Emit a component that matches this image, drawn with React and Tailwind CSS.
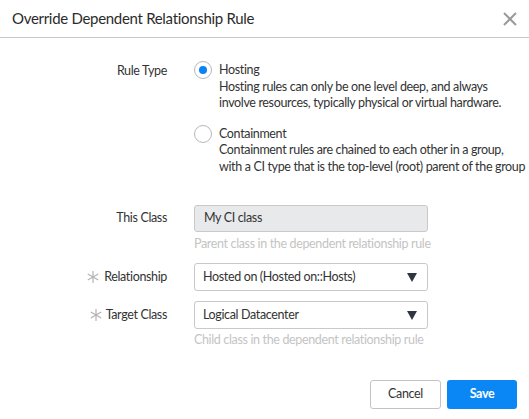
import React, { useState } from "react";

const font = { fontFamily: "Lato, 'Open Sans', sans-serif" };

function Radio({ checked, onClick }) {
  return (
    <button
      onClick={onClick}
      className="w-[18px] h-[18px] rounded-full border border-[#b8b8b8] bg-white flex items-center justify-center shrink-0"
    >
      {checked && <span className="w-[8px] h-[8px] rounded-full bg-[#0a84f5]" />}
    </button>
  );
}

function Asterisk() {
  return (
    <svg width="12" height="12" viewBox="0 0 12 12">
      <g stroke="#b3b3b3" strokeWidth="1.2" strokeLinecap="round">
        <line x1="6" y1="0.5" x2="6" y2="11.5" />
        <line x1="1.2" y1="3.2" x2="10.8" y2="8.8" />
        <line x1="1.2" y1="8.8" x2="10.8" y2="3.2" />
      </g>
    </svg>
  );
}

function Caret() {
  return (
    <svg width="10" height="9" viewBox="0 0 10 9">
      <path d="M0 0 H10 L5 9 Z" fill="#2f3640" />
    </svg>
  );
}

export default function App() {
  const [rule, setRule] = useState("hosting");

  return (
    <div
      className="w-[529px] h-[419px] bg-white text-[#333] text-[12.5px] tracking-[-0.35px] overflow-hidden"
      style={font}
    >
      {/* header */}
      <div className="h-[38px] flex items-center justify-between px-[12px] border-b border-[#c8c8cc]">
        <h1 className="text-[15px] tracking-[-0.3px] text-[#2b2b2b]">Override Dependent Relationship Rule</h1>
        <svg width="14" height="14" viewBox="0 0 14 14">
          <g stroke="#9a9a9a" strokeWidth="2">
            <line x1="1" y1="1" x2="13" y2="13" />
            <line x1="13" y1="1" x2="1" y2="13" />
          </g>
        </svg>
      </div>

      {/* body */}
      <div className="pt-[23px]">
        <div className="flex">
          <div className="w-[167px] shrink-0 text-right pt-[1px] leading-[17px]">Rule Type</div>
          <div className="ml-[27px] flex flex-col">
            <div className="flex">
              <Radio checked={rule === "hosting"} onClick={() => setRule("hosting")} />
              <div className="ml-[7px] leading-[16.5px] pt-[1px] whitespace-nowrap">
                <div>Hosting</div>
                <div>Hosting rules can only be one level deep, and always</div>
                <div>involve resources, typically physical or virtual hardware.</div>
              </div>
            </div>
            <div className="flex mt-[13px]">
              <Radio checked={rule === "containment"} onClick={() => setRule("containment")} />
              <div className="ml-[7px] leading-[16.5px] pt-[1px] whitespace-nowrap">
                <div>Containment</div>
                <div>Containment rules are chained to each other in a group,</div>
                <div>with a CI type that is the top-level (root) parent of the group</div>
              </div>
            </div>
          </div>
        </div>

        <div className="flex items-center mt-[30px]">
          <div className="w-[167px] shrink-0 text-right">This Class</div>
          <div className="ml-[27px] w-[234px] h-[27px] rounded-[3px] border border-[#c9c9c9] bg-[#e8e9eb] flex items-center px-[9px]">
            My CI class
          </div>
        </div>
        <div className="ml-[194px] mt-[4px] text-[#c4c4c4] leading-[16px]">
          Parent class in the dependent relationship rule
        </div>

        <div className="flex items-center mt-[11px]">
          <div className="w-[167px] shrink-0 flex items-center">
            <div className="flex-1 pl-[87px]"><Asterisk /></div>
            <span>Relationship</span>
          </div>
          <div className="ml-[27px] w-[234px] h-[28px] rounded-[3px] border border-[#c9c9c9] bg-white flex items-center justify-between pl-[8px] pr-[10px]">
            <span>Hosted on (Hosted on::Hosts)</span>
            <Caret />
          </div>
        </div>

        <div className="flex items-center mt-[10px]">
          <div className="w-[167px] shrink-0 flex items-center">
            <div className="flex-1 pl-[90px]"><Asterisk /></div>
            <span>Target Class</span>
          </div>
          <div className="ml-[27px] w-[234px] h-[28px] rounded-[3px] border border-[#c9c9c9] bg-white flex items-center justify-between pl-[8px] pr-[10px]">
            <span>Logical Datacenter</span>
            <Caret />
          </div>
        </div>
        <div className="ml-[194px] mt-[3px] text-[#c4c4c4] leading-[16px]">
          Child class in the dependent relationship rule
        </div>

        <div className="flex justify-end gap-[6px] pr-[12px] mt-[32px]">
          <button className="w-[71px] h-[29px] rounded-[3px] border border-[#c3c3c3] bg-white text-[#333]">
            Cancel
          </button>
          <button className="w-[70px] h-[29px] rounded-[3px] bg-[#0b87f5] text-white font-bold">
            Save
          </button>
        </div>
      </div>
    </div>
  );
}
